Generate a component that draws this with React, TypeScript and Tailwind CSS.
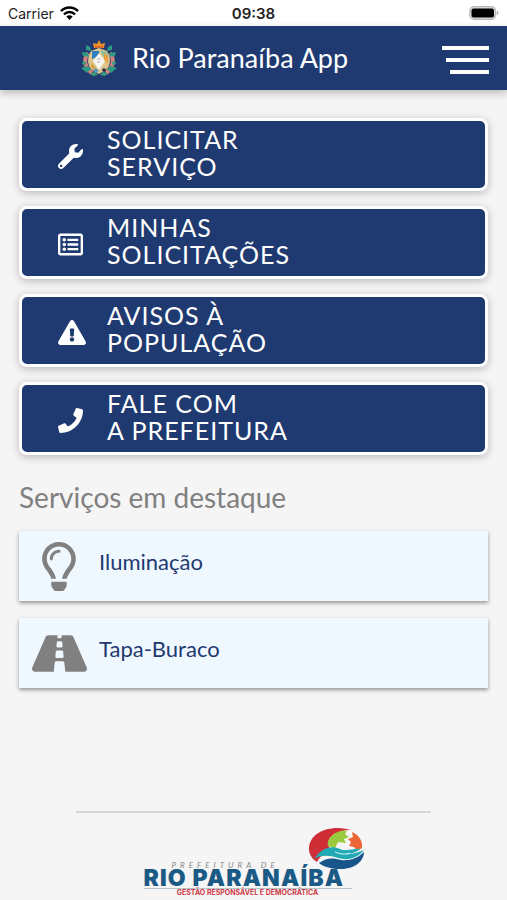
import type { ReactNode } from 'react';
import {
  FaExclamationTriangle,
  FaPhone,
  FaRegLightbulb,
  FaRegListAlt,
  FaRoad,
  FaWrench,
} from 'react-icons/fa';

function StatusBar() {
  return (
    <div className="grid h-[26px] grid-cols-3 items-center bg-white px-2 font-['Inter','Liberation_Sans',sans-serif] text-[14px] text-[#222]">
      <div className="flex items-center gap-1.5">
        <span>Carrier</span>
        <svg className="h-3.5 w-[19px]" viewBox="0 0 19 14" aria-label="Wi-Fi">
          <g fill="none" stroke="#000" strokeWidth="2.4">
            <path d="M1 5.2C5.8.3 13.2.3 18 5.2" />
            <path d="M4 8.3c3.2-3.1 7.8-3.1 11 0" />
          </g>
          <path d="M6.3 10.6c1.9-1.7 4.5-1.7 6.4 0L9.5 14z" fill="#000" />
        </svg>
      </div>
      <span className="pt-0.5 text-center text-[15px] font-semibold">09:38</span>
      <svg className="h-3.5 w-[30px] justify-self-end" viewBox="0 0 30 14" aria-label="Bateria">
        <rect x=".9" y=".7" width="25.6" height="12.6" rx="4" fill="#ddd" stroke="#b8b8b8" strokeWidth="1.3" />
        <rect x="2.5" y="2.5" width="22.5" height="9" rx="2" fill="#000" />
        <path d="M27.8 4.6c2 .8 2 4 0 4.8z" fill="#aaa" />
      </svg>
    </div>
  );
}

function CoatOfArms() {
  return (
    <svg className="h-[38px] w-[38px]" viewBox="0 0 38 38" aria-label="Brasão de Rio Paranaíba">
      <path d="M8 14C3 21 5 29 12 34M30 14c5 7 3 15-4 20" fill="none" stroke="#d8807c" strokeWidth="4" />
      <path
        d="M6 6l4 2 1 4-5-1zM32 6l-4 2-1 4 5-1zM2 13l6 1 1 4-6-1zM36 13l-6 1-1 4 6-1zM1 29l6-2 4 3-4 4zM37 29l-6-2-4 3 4 4z"
        fill="#2f9a83"
      />
      <path d="M3 22l3 1v3l-4-1zM35 22l-3 1v3l4-1zM10 34l5-1 3 3-5 1zM28 34l-5-1-3 3 5 1z" fill="#3d9c80" />
      <path d="M11 12l8-3 8 3c4 7 4 14-1 19l-7 4-7-4c-5-5-5-12-1-19z" fill="#ddc78f" />
      <path d="M12 12h7v5l-7 3z" fill="#2f7fc0" />
      <path d="M20 11l7 2 1 6-5-2z" fill="#8fc09a" />
      <path d="M24 14l4 3v8l-4-4z" fill="#e6a13e" />
      <path d="M11 23l5 6-1 3-4-4z" fill="#d9a44e" />
      <path d="M15 29l4 2-2 3-4-2z" fill="#5d9bbd" />
      <path d="M19 14l6 8-6 9-6-9z" fill="#f7f5f2" />
      <path d="M17 20h4M17 23h3" stroke="#b5b1bd" strokeWidth="1" />
      <circle cx="24" cy="31" r="1.8" fill="#222a44" />
      <path d="M14 9l-1-5 4 1 2-4 2 4 4-1-1 5z" fill="#f0922c" />
      <path d="M15 8h8" stroke="#c8552b" strokeWidth="1.4" />
    </svg>
  );
}

function Header() {
  return (
    <header className="relative flex h-16 items-center bg-[#1f3a70] pr-[18px] pl-20 text-white shadow-[0_3px_8px_rgba(0,0,0,0.25)]">
      <CoatOfArms />
      <h1 className="ml-3.5 text-[27px] leading-8">Rio Paranaíba App</h1>
      <button type="button" aria-label="Abrir menu" className="ml-auto flex flex-col items-end gap-2 pt-1">
        <span className="h-1 w-[47px] bg-white" />
        <span className="h-1 w-[43px] bg-white" />
        <span className="h-1 w-[39px] bg-white" />
      </button>
    </header>
  );
}

function ActionButton({ icon, first, second }: { icon: ReactNode; first: string; second: string }) {
  return (
    <button
      type="button"
      className="flex h-[73px] w-full items-center rounded-lg border-[3px] border-white bg-[#1f3a70] pl-9 text-left text-white shadow-[0_2px_8px_rgba(0,0,0,0.25)]"
    >
      <span className="flex w-[49px] shrink-0 pt-1">{icon}</span>
      <span className="pb-1 text-[25px] leading-[27px] tracking-[1px]">
        {first}
        <br />
        {second}
      </span>
    </button>
  );
}

function ServiceCard({ icon, label }: { icon: ReactNode; label: string }) {
  return (
    <a
      href="#"
      className="flex h-[70px] items-center bg-[#f0f8ff] shadow-[0_2px_4px_rgba(0,0,0,0.4)]"
    >
      <span className="flex w-20 shrink-0 justify-center">{icon}</span>
      <span className="pb-2 text-[22px] leading-7 text-[#1f3a70]">{label}</span>
    </a>
  );
}

function CityLogo() {
  return (
    <div className="relative w-[222px] pt-[34px] whitespace-nowrap">
      <svg className="absolute top-0 right-0 h-[43px] w-[58px]" viewBox="0 0 58 43" aria-hidden="true">
        <path d="M30 1C12 1 1 10 1 22c0 5 3 10 8 13 4-8 11-10 15-12-7-5-4-15 7-18 5-2 9-2 12-2-4-1-8-2-13-2z" fill="#cf2e36" />
        <path d="M20 19C18 10 30 2 39 4l-2 3 4 3-5 2 2 4-8-1-3 6z" fill="#9bc93e" />
        <path d="M44 5c7 3 11 9 10 16l-5 3-3-4-5-1 2-4-3-3 5-2z" fill="#ed6635" />
        <path d="M6 32c8-12 18-14 26-10 6 3 15-1 20 0-4 4-10 5-15 5 7 1 13-2 19-4-6 8-16 11-26 8-9-3-18-3-24 1z" fill="#21a9b5" />
        <path d="M27 25c5 2 10 3 15 1" stroke="#e8f7f7" strokeWidth="1" fill="none" />
        <path d="M11 36c8-6 15-5 22-3 9 1 17-2 23-8 0 8-8 17-23 17-9 0-17-2-22-6z" fill="#17558b" />
      </svg>
      <div className="pl-7 text-[8px] leading-2 tracking-[0.5em] text-[#888] italic">PREFEITURA DE</div>
      <div className="font-['Inter',sans-serif] text-[23px] leading-[19px] font-black tracking-wider text-[#1b5a85]">
        RIO PARANAÍBA
      </div>
      <div className="w-[208px] border-t border-[#b5c2cb] text-center font-['Inter',sans-serif] text-[7px] leading-2 font-bold text-[#cf3944]">
        GESTÃO RESPONSÁVEL E DEMOCRÁTICA
      </div>
    </div>
  );
}

export default function App() {
  return (
    <div className="flex min-h-screen flex-col bg-[#f5f5f5] font-['Lato','Liberation_Sans',sans-serif]">
      <StatusBar />
      <Header />
      <main className="px-[19px] pt-7">
        <nav className="flex flex-col gap-[15px]">
          <ActionButton icon={<FaWrench className="size-[25px]" />} first="SOLICITAR" second="SERVIÇO" />
          <ActionButton icon={<FaRegListAlt className="size-[25px]" />} first="MINHAS" second="SOLICITAÇÕES" />
          <ActionButton
            icon={<FaExclamationTriangle className="h-[25px] w-7" />}
            first="AVISOS À"
            second="POPULAÇÃO"
          />
          <ActionButton icon={<FaPhone className="size-[25px]" />} first="FALE COM" second="A PREFEITURA" />
        </nav>
        <h2 className="mt-6 text-[28px] leading-9 text-[#808080]">Serviços em destaque</h2>
        <div className="mt-4 flex flex-col gap-[17px]">
          <ServiceCard icon={<FaRegLightbulb className="h-[49px] w-[34px] text-[#808080]" />} label="Iluminação" />
          <ServiceCard icon={<FaRoad className="h-[49px] w-[55px] text-[#808080]" />} label="Tapa-Buraco" />
        </div>
      </main>
      <footer className="mt-auto flex flex-col items-center pb-[3px]">
        <hr className="w-[70%] border-t-2 border-[#d6d6d6]" />
        <div className="mt-3.5 pl-0.5">
          <CityLogo />
        </div>
      </footer>
    </div>
  );
}
